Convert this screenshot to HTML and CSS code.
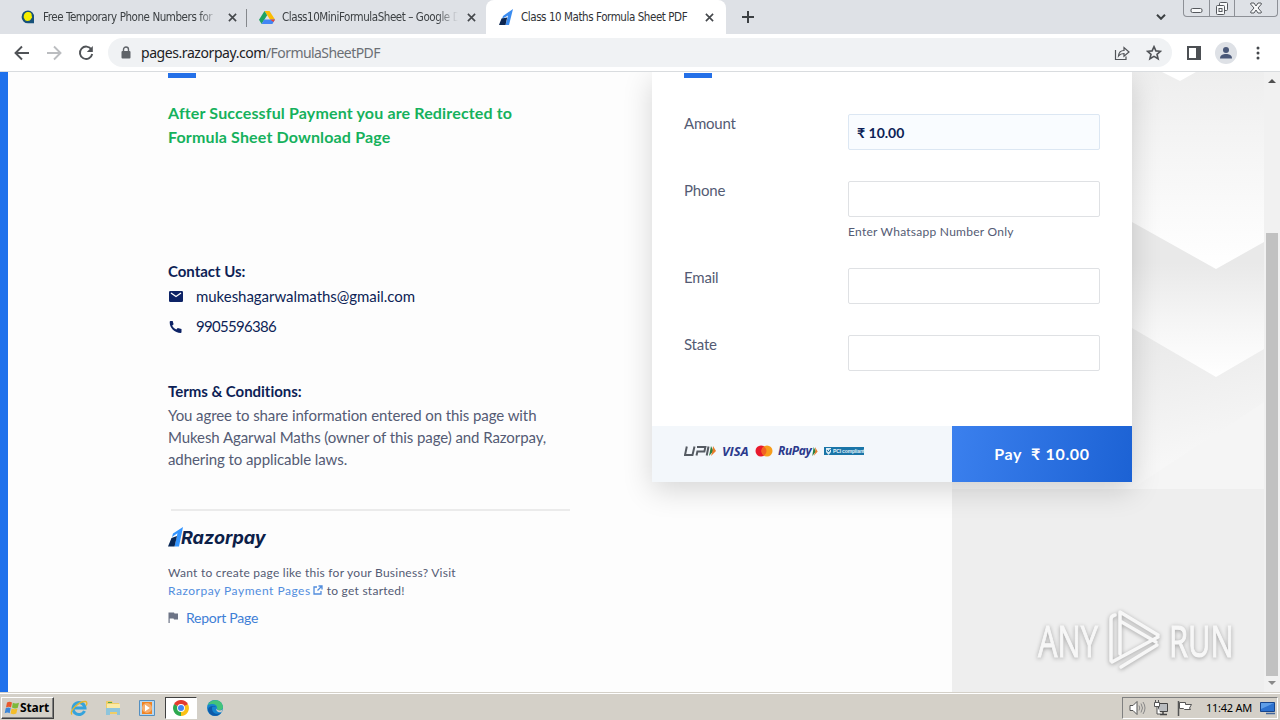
FILE: index.html
```html
<!DOCTYPE html>
<html lang="en">
<head>
    <meta charset="UTF-8">
    <meta name="viewport" content="width=device-width, initial-scale=1.0">
    <title>Class 10 Maths Formula Sheet PDF</title>
    <link rel="stylesheet" href="styles.css">
</head>
<body>
    <!-- Tabs -->
    <div class="tabbar">
        <div class="tab tab-first">
            <svg class="favicon" viewBox="0 0 16 16"><path d="M8 1.500a6.300 6.300 0 1 0 0 12.800h6V8A6 6 0 0 0 8 1.500z" fill="#17517a"/><path d="M3.700 8.500c0-4 2-5.500 4.500-5.500 2.800 0 3.800 2 3.500 4.200.8.700.4 1.800-.4 2.200C10.500 12 7 12.500 5.200 11.200z" fill="#f4ee00"/></svg>
            <span class="tab-title fade">Free Temporary Phone Numbers for</span>
            <svg class="close" viewBox="0 0 10 10"><path d="M1 1l8 8M9 1L1 9"/></svg>
        </div>
        <div class="tab tab-second">
            <svg class="favicon" viewBox="0 0 16 16"><path d="M5.500 2h5L16 10.500h-5z" fill="#fbbc04"/><path d="M5.500 2L0 10.800 2.600 15 8.200 6.200z" fill="#1ea362"/><path d="M5.200 10.500H16L13.400 15H2.600z" fill="#4285f4"/><path d="M11 10.500h5L14.500 13z" fill="#ea4335"/></svg>
            <span class="tab-title fade">Class10MiniFormulaSheet – Google D</span>
            <svg class="close" viewBox="0 0 10 10"><path d="M1 1l8 8M9 1L1 9"/></svg>
        </div>
        <div class="tab tab-active">
            <svg class="favicon" viewBox="0 0 16 16"><path d="M15 0L5 7 4 10l6-3.500L7.500 16H11z" fill="#3b8cf0"/><path d="M3.500 9.500L1 16h6.500l1.700-7.500z" fill="#0c2651"/></svg>
            <span class="tab-title">Class 10 Maths Formula Sheet PDF</span>
            <svg class="close" viewBox="0 0 10 10"><path d="M1 1l8 8M9 1L1 9"/></svg>
        </div>
        <svg class="new-tab" viewBox="0 0 12 12"><path d="M6 0v12M0 6h12"/></svg>
        <svg class="tab-search" viewBox="0 0 10 6"><path d="M1 .8l4 4 4-4"/></svg>
        <div class="window-buttons">
            <span><svg viewBox="0 0 25 17"><rect x="7" y="8.500" width="11" height="4" rx="1.500"/></svg></span>
            <span><svg viewBox="0 0 24 17"><rect x="9.500" y="2.500" width="8" height="8" rx="1"/><rect x="6.500" y="5.500" width="8" height="9" rx="1"/><rect x="9" y="8.500" width="3" height="3"/></svg></span>
            <span><svg viewBox="0 0 42 17"><path d="M16 3h3l2 3 2-3h3l.5 1-3.500 4 3.500 4-.5 1h-3l-2-3-2 3h-3l-.5-1L19 8l-3.500-4z"/></svg></span>
        </div>
    </div>

    <!-- Toolbar -->
    <div class="toolbar">
        <svg class="nav-icon" viewBox="0 0 16 16"><path d="M15 8H2M8 1.500L1.500 8 8 14.500"/></svg>
        <svg class="nav-icon disabled" viewBox="0 0 16 16"><path d="M1 8h13M8 1.500L14.500 8 8 14.500"/></svg>
        <svg class="nav-icon" viewBox="0 0 16 16"><path d="M13.400 4.500A6.200 6.200 0 1 0 14.200 9"/><path d="M14.800 1v6H8.800z" class="solid"/></svg>
        <div class="omnibox">
            <svg class="lock" viewBox="0 0 10 13"><rect x="0.500" y="5" width="9" height="7.500" rx="1" fill="#5f6368"/><path d="M2.500 5V3.500a2.500 2.500 0 0 1 5 0V5" fill="none" stroke="#5f6368" stroke-width="1.400"/></svg>
            <span class="url"><b>pages.razorpay.com</b><i>/FormulaSheetPDF</i></span>
            <svg class="share" viewBox="0 0 16 16"><path d="M1.500 5v9.500h10.500v-3M4.500 11c.3-4 2.500-5.500 5.500-5.500V2.500L15 7l-5 4.300V8.500c-2.500 0-4 .5-5.500 2.500z"/></svg>
            <svg class="star" viewBox="0 0 16 16"><path d="M8 1.700l1.900 4.200 4.600.4-3.500 3 1.100 4.500L8 11.400l-4.100 2.400L5 9.300l-3.500-3 4.600-.4z"/></svg>
        </div>
        <svg class="side-panel" viewBox="0 0 14 14"><path d="M1 1h12v12H1z" fill="none" stroke="#4c4f53" stroke-width="2"/><path d="M9 1h4v12H9z" fill="#4c4f53"/></svg>
        <svg class="avatar" viewBox="0 0 22 22"><circle cx="11" cy="11" r="11" fill="#dee1e6"/><circle cx="11" cy="8" r="3" fill="#4a5878"/><path d="M5 16.500c0-3.500 3-4.500 6-4.500s6 1 6 4.500z" fill="#4a5878"/></svg>
        <svg class="menu" viewBox="0 0 4 14"><circle cx="2" cy="2" r="1.500"/><circle cx="2" cy="7" r="1.500"/><circle cx="2" cy="12" r="1.500"/></svg>
    </div>

    <!-- Payment page -->
    <div class="page">
        <svg class="pattern" viewBox="0 0 312 417" preserveAspectRatio="none">
            <defs>
                <linearGradient id="g1" x1="0" y1="0" x2="0" y2="1"><stop offset="0" stop-color="#eeeeee"/><stop offset="0.450" stop-color="#f6f6f6"/><stop offset="1" stop-color="#ffffff"/></linearGradient>
                <linearGradient id="g2" x1="0" y1="0.350" x2="0" y2="1"><stop offset="0" stop-color="#e9e9e9"/><stop offset="0.500" stop-color="#f5f5f5"/><stop offset="1" stop-color="#ffffff"/></linearGradient>
                <linearGradient id="g3" x1="0" y1="0" x2="0.300" y2="1"><stop offset="0" stop-color="#e5e5e5"/><stop offset="0.500" stop-color="#ebebeb"/><stop offset="1" stop-color="#f7f7f7"/></linearGradient>
            </defs>
            <path d="M0 200h312v217H0z" fill="url(#g3)"/>
            <path d="M180 417L312 330v87z" fill="#f5f5f5"/>
            <path d="M0 130h312v147l-48 28-84-49H0z" fill="url(#g2)"/>
            <path d="M0 0h312v170l-48 27-84-47H0z" fill="url(#g1)"/>
            <path d="M210 0h34l-16 9z" fill="#fff"/>
        </svg>

        <div class="info">
            <div class="bar"></div>
            <h2 class="notice">After Successful Payment you are Redirected to<br>Formula Sheet Download Page</h2>

            <h3 class="contact-title">Contact Us:</h3>
            <div class="contact">
                <svg viewBox="0 0 16 12"><rect x="1" width="14" height="11" rx="1.300" fill="#0d2366"/><path d="M3 2l5 3.500L13 2" fill="none" stroke="#fff" stroke-width="1.300"/></svg>
                <span>mukeshagarwalmaths@gmail.com</span>
            </div>
            <div class="contact">
                <svg viewBox="0 0 16 12"><path d="M2.500 0h2.200l.9 3.200-1.500 1.500a9 9 0 0 0 4.200 3.800l1.400-1.400 3.800.9v3c0 .5-.3.900-.8.900C6.700 11.900 1.500 6.700 1.700.900c0-.5.300-.9.800-.9z" fill="#0d2366"/></svg>
                <span class="number">9905596386</span>
            </div>

            <h3 class="terms-title">Terms &amp; Conditions:</h3>
            <p class="terms">You agree to share information entered on this page with<br>Mukesh Agarwal Maths (owner of this page) and Razorpay,<br>adhering to applicable laws.</p>

            <div class="divider"></div>
            <div class="brand">
                <svg viewBox="0 0 15 20"><path d="M15 0L5 6.500 4 10l5.500-3.700L6.500 19.500H11z" fill="#3395ff"/><path d="M3.500 11L0 19.500h6.500L9 9z" fill="#072654"/></svg>
                <span>Razorpay</span>
            </div>
            <p class="create">Want to create page like this for your Business? Visit<br><a>Razorpay Payment Pages</a><svg class="external" viewBox="0 0 10 10"><path d="M4 2H1v7h7V6M5.500 1H9v3.500M9 1L4.500 5.500"/></svg><span>to get started!</span></p>
            <div class="report">
                <svg viewBox="0 0 10 11"><path d="M.5.500H6l.5 1H10v6H6l-.5-1H1.700V11H.5z" fill="#6d7486"/></svg>
                <a>Report Page</a>
            </div>
        </div>

        <div class="card">
            <div class="fields">
                <div class="bar"></div>
                <div class="field amount">
                    <label>Amount</label>
                    <div class="input filled">₹ 10.00</div>
                </div>
                <div class="field">
                    <label>Phone</label>
                    <div>
                        <div class="input"></div>
                        <div class="hint">Enter Whatsapp Number Only</div>
                    </div>
                </div>
                <div class="field email">
                    <label>Email</label>
                    <div class="input"></div>
                </div>
                <div class="field">
                    <label>State</label>
                    <div class="input"></div>
                </div>
            </div>
            <div class="card-footer">
                <div class="methods">
                    <svg class="upi" viewBox="0 0 33 12"><path d="M2.800 1.500L1 10h7.500l2-8.500M12.500 10.500l.9-4h7l1-4.500H13M24.500 1.500L22.700 10.500" fill="none" stroke="#555b62" stroke-width="2"/><path d="M27 1l2.500 5-4.500 5z" fill="#2c8040"/><path d="M29 1l3 5-5 5 1.500-5z" fill="#e97b28"/></svg>
                    <span class="visa">VISA</span>
                    <svg class="mastercard" viewBox="0 0 18 12"><circle cx="6" cy="6" r="5.500" fill="#e8192c"/><circle cx="12" cy="6" r="5.500" fill="#f79e1b"/><path d="M9 1.400a5.500 5.500 0 0 1 0 9.200 5.500 5.500 0 0 1 0-9.200z" fill="#f26322"/></svg>
                    <span class="rupay">RuPay</span>
                    <svg class="rupay-arrow" viewBox="0 0 6 10"><path d="M1.500 0L4 5 0 10z" fill="#2c8040"/><path d="M3 0l3 5-4.500 5L3.500 5z" fill="#e97b28"/></svg>
                    <span class="pci"><svg viewBox="0 0 7 7"><path d="M1 0h5v4L3.500 7 1 4z" fill="#d9ecf5"/><path d="M2 2l1.500 2L5.500 1" fill="none" stroke="#14699b"/></svg>PCI compliant</span>
                </div>
                <div class="pay">Pay&nbsp; ₹ 10.00</div>
            </div>
        </div>

        <div class="scrollbar">
            <svg viewBox="0 0 8 4"><path d="M0 4l4-4 4 4z" fill="#505050"/></svg>
            <div class="thumb"></div>
            <svg viewBox="0 0 8 4"><path d="M0 0l4 4 4-4z" fill="#8a8a8a"/></svg>
        </div>

        <div class="watermark">
            <span>ANY</span>
            <svg viewBox="0 0 56 64"><path d="M4 53V11q0-3 4-4M13 46V4l38 23M13 13l36 21M13 46V13M5 54l46-25M14 59l36-22"/></svg>
            <span>RUN</span>
        </div>
    </div>

    <!-- Taskbar -->
    <div class="taskbar">
        <div class="start">
            <svg viewBox="0 0 16 16"><path d="M3 2.500c2-1.200 3.500-1 5 0L7 7.500c-1.500-1-3-1-5 0z" fill="#e8582c"/><path d="M8.800 2.800c2 1 3.700 1 6.200 0l-1.200 5c-2 1-3.800.8-5.800-.2z" fill="#7db93b"/><path d="M1.700 8.300c2-1.100 3.400-1 5 0l-1 5c-1.600-1-3-1-5 0z" fill="#3b86d8"/><path d="M7.600 8.600c2 1 3.700 1 5.900 0l-1.200 5c-2 1-3.600 1-5.700 0z" fill="#f4bd2a"/></svg>
            <span>Start</span>
        </div>
        <div class="launch">
            <svg viewBox="0 0 18 18"><path d="M14.500 12a6 6 0 1 1 .5-3H4.500" fill="none" stroke="#35a3dc" stroke-width="3"/><path d="M2 15.500C-1 12 9 2 15.500 2.500c2 .3 1.500 3 .5 4" fill="none" stroke="#e6b62c" stroke-width="1.300"/></svg>
        </div>
        <div class="launch">
            <svg viewBox="0 0 18 18"><path d="M2 2h6l1 2h6v11H2z" fill="#efcd66"/><path d="M3 5h13v6H3z" fill="#faeaa5"/><path d="M2 9h14v7h-3v-3H6v3H2z" fill="#8ec5dc"/><path d="M4 3h4v1H4z" fill="#57a64a"/></svg>
        </div>
        <div class="launch">
            <svg viewBox="0 0 18 18"><path d="M1.500 1.500h15v15h-15z" fill="#b9d7ee" stroke="#548fc0"/><path d="M4 3h10v12H4z" fill="#f08322"/><path d="M9 4a5 5 0 1 1 0 10 5 5 0 0 1 0-10zM7 5.500v7l5-3.500z" fill="#fff" fill-rule="evenodd" opacity=".35"/><path d="M7 5.500l5 3.500-5 3.500z" fill="#fff"/></svg>
        </div>
        <div class="launch open">
            <svg viewBox="0 0 18 18"><path d="M9 9L2.100 5A8 8 0 0 1 15.900 5z" fill="#e33b2e"/><path d="M9 9l6.900-4A8 8 0 0 1 9 17z" fill="#fbc116"/><path d="M9 9v8A8 8 0 0 1 2.100 5z" fill="#2da94f"/><path d="M2.100 5h13.800L9 9z" fill="#e33b2e"/><circle cx="9" cy="9" r="3.900" fill="#fff"/><circle cx="9" cy="9" r="3" fill="#4285f4"/></svg>
        </div>
        <div class="launch">
            <svg viewBox="0 0 18 18"><circle cx="9" cy="9" r="8" fill="#1584cf"/><path d="M2 6c2-6 14-7 15 2 0 4-5 4-6 2 1-5-5-6-9-4z" fill="#43c47b"/><path d="M6 9c0 5 4 7 9 5-4 5-12 3-13-3 0-4 6-5 8-3-2-.5-4-1-4 1z" fill="#0f5aa8"/><path d="M10.500 9.500c.5 2.300 4 2.500 6.300 1l-1.300 2.500c-3 1-6-1-5-3.500z" fill="#d5d0c8"/></svg>
        </div>
        <div class="tray">
            <svg viewBox="0 0 18 16"><path d="M2 5.500h3l4-4v13l-4-4H2z" fill="#fff" stroke="#555"/><path d="M11 5.500q1.500 2.500 0 5M13 3.500q3 4.500 0 9M15 2q4 6 0 12" fill="none" stroke="#888"/></svg>
            <svg viewBox="0 0 18 16"><path d="M6.500 3.500h9v8h-9z" fill="#b9bcbf" stroke="#444"/><path d="M8 14.500h7M11 12v2" stroke="#444" stroke-width="1.500"/><path d="M2.500 2.500h5v4h-5zM3.500 0v2M6.500 0v2M5 6v8h4" fill="#fff" stroke="#555"/></svg>
            <svg viewBox="0 0 18 16"><path d="M2.500 1v15" stroke="#555" stroke-width="1.500"/><path d="M3.500 2.500h6v2h6l-2 3.500 1 1.500h-6l-1-1h-4z" fill="#fff" stroke="#555"/></svg>
            <span>11:42 AM</span>
            <svg class="desktop" viewBox="0 0 16 14"><path d="M.5 1.500h14v9H.5z" fill="#2d72cf" stroke="#17458c"/><path d="M1 2h13L1 8z" fill="#5e9ee8"/><path d="M6 12.500h9" stroke="#41669b" stroke-width="1.500"/></svg>
        </div>
    </div>
</body>
</html>
```
FILE: styles.css
```css
* {
    box-sizing: border-box;
}
body {
    margin: 0;
    width: 1280px;
    height: 720px;
    overflow: hidden;
    display: flex;
    flex-direction: column;
    font-family: Lato, "Liberation Sans", sans-serif;
    background: #fff;
}
h2, h3, p {
    margin: 0;
}
svg {
    display: block;
    flex: none;
}

/* Tabs */
.tabbar {
    height: 34px;
    flex: none;
    display: flex;
    align-items: center;
    background: #dee1e6;
    font: 11.5px "DejaVu Sans Condensed", "DejaVu Sans", sans-serif;
    letter-spacing: -0.43px;
    color: #3c4043;
}
.tab {
    height: 34px;
    display: flex;
    align-items: center;
}
.tab-first {
    width: 247px;
    padding-left: 20px;
    background: linear-gradient(#85888c, #85888c) right 9px / 1px 18px no-repeat;
}
.tab-second {
    width: 239px;
    padding-left: 12px;
}
.tab-active {
    width: 240px;
    padding-left: 12px;
    background: #fff;
    border-radius: 8px 8px 0 0;
    color: #303236;
}
.favicon {
    width: 16px;
    height: 16px;
}
.tab-title {
    width: 176px;
    margin-left: 7px;
    white-space: nowrap;
}
.tab-active .tab-title {
    width: 177px;
}
.fade {
    -webkit-mask-image: linear-gradient(to right, #000 88%, transparent);
    mask-image: linear-gradient(to right, #000 88%, transparent);
}
.close {
    width: 9px;
    height: 9px;
    margin-left: 9px;
    fill: none;
    stroke: #45484c;
    stroke-width: 1.8;
}
.tab-active .close {
    margin-left: 7px;
}
.new-tab {
    width: 12px;
    height: 12px;
    margin-left: 16px;
    stroke: #3c4043;
    stroke-width: 2;
}
.tab-search {
    width: 10px;
    height: 6px;
    margin-left: 402px;
    fill: none;
    stroke: #3c4043;
    stroke-width: 2;
}
.window-buttons {
    height: 17px;
    align-self: flex-start;
    display: flex;
    margin-left: 17px;
    border: 1px solid #8d9096;
    border-top: 0;
    border-radius: 0 0 4px 4px;
}
.window-buttons span + span {
    border-left: 1px solid #8d9096;
}
.window-buttons svg {
    height: 17px;
    fill: #f8f9fa;
    stroke: #55585d;
}

/* Toolbar */
.toolbar {
    height: 38px;
    flex: none;
    display: flex;
    align-items: center;
    padding: 0 19px 0 14px;
    border-bottom: 1px solid #d9dcdf;
}
.nav-icon {
    width: 16px;
    height: 16px;
    margin-right: 16px;
    fill: none;
    stroke: #505357;
    stroke-width: 1.9;
}
.nav-icon .solid {
    fill: #505357;
    stroke: none;
}
.disabled {
    stroke: #bbbdc0;
}
.omnibox {
    width: 1064px;
    height: 29px;
    display: flex;
    align-items: center;
    margin-left: -2px;
    padding: 0 10px 0 13px;
    border-radius: 15px;
    background: #f0f2f4;
}
.lock {
    width: 10px;
    height: 13px;
}
.url {
    flex: 1;
    margin-left: 10px;
    font: 14px/20px "Noto Sans", sans-serif;
}
.url b {
    font-weight: normal;
    letter-spacing: -0.43px;
    color: #202124;
}
.url i {
    font-style: normal;
    letter-spacing: -0.57px;
    color: #6b6f74;
}
.share, .star {
    width: 16px;
    height: 16px;
    fill: none;
    stroke: #505357;
    stroke-width: 1.2;
}
.star {
    margin-left: 16px;
    stroke-width: 1.6;
}
.side-panel {
    width: 14px;
    height: 14px;
    margin-left: 15px;
}
.avatar {
    width: 22px;
    height: 22px;
    margin-left: 14px;
}
.menu {
    width: 4px;
    height: 14px;
    margin-left: 19px;
    fill: #45484c;
}

/* Payment page */
.page {
    height: 620px;
    flex: none;
    position: relative;
    display: grid;
    grid-template-columns: 652px 480px 132px 16px;
    grid-template-rows: 620px;
    background: linear-gradient(to right, #1f71ec 8px, #fdfdfd 8px, #fdfdfd 952px, #eee 952px);
    overflow: hidden;
}
.pattern {
    grid-area: 1 / 2 / 2 / 4;
    justify-self: end;
    width: 312px;
    height: 417px;
}
.bar {
    width: 28px;
    height: 5px;
    background: #2470e8;
}
.info {
    grid-area: 1 / 1;
    padding: 1px 0 0 168px;
    color: #545b74;
}
.notice {
    margin-top: 23px;
    font-size: 16px;
    line-height: 24px;
    letter-spacing: 0.15px;
    color: #15b15c;
}
.info h3 {
    font-size: 15px;
    line-height: 22px;
    letter-spacing: -0.03px;
    color: #0d1f56;
}
.info .contact-title {
    margin-top: 111px;
    margin-bottom: 3px;
}
.contact {
    height: 30px;
    display: flex;
    align-items: center;
    font-size: 15px;
    line-height: 22px;
    letter-spacing: -0.04px;
    color: #0d1f56;
}
.contact-title + .contact {
    margin-top: -4px;
}
.contact svg {
    width: 16px;
    height: 12px;
    margin: 2px 12px 0 0;
}
.number {
    letter-spacing: -0.7px;
}
.info .terms-title {
    margin-top: 39px;
}
.terms {
    margin-top: 2px;
    font-size: 15px;
    line-height: 22px;
    letter-spacing: -0.08px;
    white-space: nowrap;
}
.divider {
    width: 399px;
    height: 2px;
    margin: 39px 0 0 3px;
    background: #ebebeb;
}
.brand {
    display: flex;
    align-items: center;
    margin-top: 16px;
    font: italic bold 18px/22px Inter, sans-serif;
    letter-spacing: 0;
    color: #0c2048;
}
.brand svg {
    width: 15px;
    height: 20px;
    margin: -2px -2px 0 0;
}
.create {
    margin-top: 15px;
    font-size: 12px;
    line-height: 18px;
    letter-spacing: 0.25px;
}
.create a {
    letter-spacing: 0.52px;
    color: #528ddd;
}
.create .external {
    display: inline-block;
    width: 10px;
    height: 10px;
    margin: 0 4px 0 2px;
    fill: none;
    stroke: #528ddd;
    stroke-width: 1.3;
}
.report {
    display: flex;
    align-items: center;
    margin-top: 8px;
    font-size: 14px;
    line-height: 20px;
    letter-spacing: -0.26px;
    color: #3f7fd6;
}
.report svg {
    width: 10px;
    height: 11px;
    margin: -2px 8px 0 0;
}

/* Form card */
.card {
    grid-area: 1 / 2;
    width: 480px;
    height: 410px;
    display: flex;
    flex-direction: column;
    background: #fff;
    box-shadow: 0 8px 28px rgba(0, 0, 0, 0.16);
}
.fields {
    height: 354px;
    padding: 1px 32px 0;
}
.field {
    display: grid;
    grid-template-columns: 164px 252px;
    align-items: start;
    margin-top: 31px;
}
.amount {
    margin-top: 36px;
}
.email {
    margin-top: 27px;
}
.field label {
    font-size: 15px;
    line-height: 18px;
    letter-spacing: -0.2px;
    color: #545b74;
}
.input {
    height: 36px;
    border: 1px solid #dfe1e4;
    border-radius: 2px;
    background: #fff;
}
.filled {
    padding-left: 8px;
    border-color: #dce7f3;
    background: #f9fcff;
    font-size: 14px;
    font-weight: bold;
    line-height: 35px;
    color: #0d1f56;
}
.hint {
    margin-top: 6px;
    font-size: 12px;
    line-height: 18px;
    letter-spacing: 0.26px;
    color: #545b74;
}
.card-footer {
    height: 56px;
    display: flex;
    background: #f3f7fb;
}
.methods {
    width: 300px;
    height: 14px;
    display: flex;
    align-items: center;
    margin-top: 18px;
    padding-left: 32px;
}
.upi {
    width: 33px;
    height: 12px;
}
.visa, .rupay {
    font: italic bold 13px/14px "Open Sans", sans-serif;
    letter-spacing: -0.1px;
    color: #2b3a8c;
}
.visa {
    width: 28px;
    margin-left: 5px;
}
.mastercard {
    width: 18px;
    height: 12px;
    margin-left: 5px;
}
.rupay {
    width: 34px;
    margin-left: 5px;
    font-size: 12px;
    letter-spacing: -0.4px;
}
.rupay-arrow {
    width: 6px;
    height: 9px;
}
.pci {
    width: 40px;
    height: 8px;
    display: flex;
    align-items: center;
    margin-left: 6px;
    background: #1a75a8;
    font: bold 5px/8px "Liberation Sans", sans-serif;
    letter-spacing: -0.15px;
    color: #e2f1f8;
    white-space: nowrap;
}
.pci svg {
    width: 7px;
    height: 7px;
    margin: 0 1px;
}
.pay {
    width: 180px;
    background: linear-gradient(100deg, #3b80ee, #1c62d4);
    text-align: center;
    font-size: 16px;
    font-weight: bold;
    line-height: 56px;
    letter-spacing: 0.68px;
    color: #fff;
}

/* Scrollbar */
.scrollbar {
    grid-area: 1 / 4;
    display: flex;
    flex-direction: column;
    align-items: center;
    padding-top: 7px;
    background: #f1f1f1;
}
.scrollbar svg {
    width: 8px;
    height: 4px;
}
.thumb {
    width: 12px;
    height: 443px;
    margin: 150px 0 5px;
    background: #c1c1c1;
}

/* Watermark lies over the page corner */
.watermark {
    position: absolute;
    left: 1038px;
    top: 536px;
    display: flex;
    align-items: center;
    font: 44px/64px "Open Sans", sans-serif;
    color: #f7f7f7;
    filter: drop-shadow(0 1px 2px rgba(0, 0, 0, 0.32));
}
.watermark span {
    width: 65px;
    transform: scaleX(0.7);
    transform-origin: left;
    -webkit-text-stroke: 1px #f7f7f7;
}
.watermark svg {
    width: 56px;
    height: 64px;
    margin: 0 6px 0 4px;
    fill: none;
    stroke: #f7f7f7;
    stroke-width: 3.5;
    stroke-linejoin: round;
    stroke-linecap: round;
}

/* Taskbar */
.taskbar {
    height: 28px;
    flex: none;
    display: flex;
    align-items: center;
    padding: 2px 2px 0 1px;
    border-top: 1px solid #d4d0c8;
    background: #d4d0c8;
    box-shadow: inset 0 1px #fff;
}
.start {
    width: 53px;
    height: 22px;
    display: flex;
    align-items: center;
    margin-right: 9px;
    padding-left: 2px;
    border: 1px solid;
    border-color: #fff #404040 #404040 #fff;
    box-shadow: inset -1px -1px #808080;
    font: bold 12px "Noto Sans", sans-serif;
    letter-spacing: -0.12px;
    color: #000;
}
.start svg {
    width: 16px;
    height: 16px;
}
.launch {
    width: 32px;
    height: 22px;
    display: flex;
    align-items: center;
    justify-content: center;
    margin-right: 2px;
}
.launch svg {
    width: 18px;
    height: 18px;
}
.open {
    border: 1px solid;
    border-color: #404040 #fff #fff #404040;
    background: #fff;
}
.tray {
    width: 156px;
    height: 22px;
    display: flex;
    align-items: center;
    margin-left: auto;
    padding-left: 5px;
    border: 1px solid;
    border-color: #808080 #fff #fff #808080;
    font: 11px "Noto Sans", sans-serif;
    letter-spacing: -0.25px;
    color: #000;
    white-space: nowrap;
}
.tray svg {
    width: 18px;
    height: 16px;
    margin-right: 6px;
}
.tray span {
    width: 46px;
    margin-left: 6px;
}
.tray .desktop {
    width: 16px;
    height: 14px;
    margin: 0 0 0 8px;
}
```
